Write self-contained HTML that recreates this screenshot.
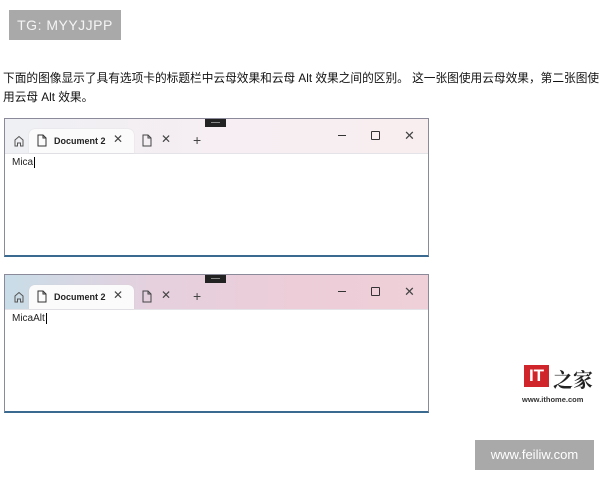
<!DOCTYPE html>
<html><head><style>
body{margin:0;width:600px;height:480px;background:#fff;font-family:"Liberation Sans","Noto Sans CJK SC",sans-serif;position:relative;overflow:hidden}
.a{position:absolute}
.tg{left:9px;top:10px;width:112px;height:30px;background:#a9a9a9;color:#f4f4f4;font-size:14px;line-height:30px;text-align:center;letter-spacing:0.5px}
.p{left:3px;top:69px;width:600px;font-size:11.7px;line-height:19px;color:#111;white-space:nowrap}
.win{left:4px;width:425px;height:139px;border:1px solid #8a8a9a;box-sizing:border-box;background:#fff}
.bar{left:0;top:0;width:100%;height:34px;border-bottom:1px solid #e4e4e8}
.tab{left:24px;top:10px;width:105px;height:24px;background:#fbfbfc;border-radius:6px 6px 0 0;box-shadow:0 0 1px #ccc}
.t{font-size:9px;color:#222}
.ic{font-size:12px;color:#444}
.h{left:200px;top:0;width:21px;height:8px;background:#222}
.h:after{content:"";position:absolute;left:6px;top:3px;width:9px;height:1px;background:#888}
</style></head><body>
<div class="a tg">TG: MYYJJPP</div>
<div class="a p">下面的图像显示了具有选项卡的标题栏中云母效果和云母 Alt 效果之间的区别。 这一张图使用云母效果，第二张图使<br>用云母 Alt 效果。</div>

<div class="a win" style="top:118px;border-bottom:2px solid #3a6a90">
 <div class="a bar" style="background:linear-gradient(90deg,#eef0f4,#f6eef2 50%,#f8eef0)"></div>
 <div class="a h"></div>
 <div class="a tab"></div>
 <svg class="a" style="left:8px;top:16px" width="12" height="12" viewBox="0 0 12 12"><path d="M2 11V5L6 1.5 10 5v6H7.5V8h-3v3z" fill="none" stroke="#555" stroke-width="1"/></svg>
 <svg class="a" style="left:32px;top:15px" width="10" height="13" viewBox="0 0 10 13"><path d="M1 1h5l3 3v8H1z M6 1v3h3" fill="none" stroke="#333" stroke-width="1"/></svg>
 <div class="a t" style="left:49px;top:17px;font-weight:bold">Document 2</div>
 <div class="a ic" style="left:108px;top:13px">✕</div>
 <svg class="a" style="left:137px;top:15px" width="10" height="13" viewBox="0 0 10 13"><path d="M1 1h5l3 3v8H1z M6 1v3h3" fill="none" stroke="#444" stroke-width="1"/></svg>
 <div class="a ic" style="left:156px;top:13px">✕</div>
 <div class="a ic" style="left:188px;top:13px;font-size:14px">+</div>
 <div class="a" style="left:333px;top:16px;width:8px;height:1px;background:#333"></div>
 <div class="a" style="left:366px;top:12px;width:7px;height:7px;border:1px solid #333;border-radius:1px"></div>
 <div class="a ic" style="left:399px;top:9px;font-size:13px">✕</div>
 <div class="a" style="left:7px;top:38px;font-size:10px;color:#222">Mica<span style="border-left:1px solid #000;margin-left:1px"></span></div>
</div>

<div class="a win" style="top:274px;border-bottom:2px solid #3a6a90">
 <div class="a bar" style="background:linear-gradient(90deg,#c8dde8,#e6d0de 35%,#eccdd8 70%,#efd0d8)"></div>
 <div class="a h"></div>
 <div class="a tab"></div>
 <svg class="a" style="left:8px;top:16px" width="12" height="12" viewBox="0 0 12 12"><path d="M2 11V5L6 1.5 10 5v6H7.5V8h-3v3z" fill="none" stroke="#555" stroke-width="1"/></svg>
 <svg class="a" style="left:32px;top:15px" width="10" height="13" viewBox="0 0 10 13"><path d="M1 1h5l3 3v8H1z M6 1v3h3" fill="none" stroke="#333" stroke-width="1"/></svg>
 <div class="a t" style="left:49px;top:17px;font-weight:bold">Document 2</div>
 <div class="a ic" style="left:108px;top:13px">✕</div>
 <svg class="a" style="left:137px;top:15px" width="10" height="13" viewBox="0 0 10 13"><path d="M1 1h5l3 3v8H1z M6 1v3h3" fill="none" stroke="#444" stroke-width="1"/></svg>
 <div class="a ic" style="left:156px;top:13px">✕</div>
 <div class="a ic" style="left:188px;top:13px;font-size:14px">+</div>
 <div class="a" style="left:333px;top:16px;width:8px;height:1px;background:#333"></div>
 <div class="a" style="left:366px;top:12px;width:7px;height:7px;border:1px solid #333;border-radius:1px"></div>
 <div class="a ic" style="left:399px;top:9px;font-size:13px">✕</div>
 <div class="a" style="left:7px;top:38px;font-size:10px;color:#222">MicaAlt<span style="border-left:1px solid #000;margin-left:1px"></span></div>
</div>

<div class="a" style="left:524px;top:365px;width:25px;height:22px;background:#d0252a;color:#fff;font-weight:bold;font-size:17px;line-height:22px;text-align:center">IT</div>
<div class="a" style="left:553px;top:364px;font-size:20px;font-weight:bold;color:#222;font-family:'Noto Serif CJK SC',serif">之家</div>
<div class="a" style="left:522px;top:395px;font-size:7.5px;font-weight:bold;color:#333">www.ithome.com</div>
<div class="a" style="left:475px;top:440px;width:119px;height:30px;background:#a9a9a9;color:#fff;font-size:13px;line-height:30px;text-align:center">www.feiliw.com</div>
</body></html>
